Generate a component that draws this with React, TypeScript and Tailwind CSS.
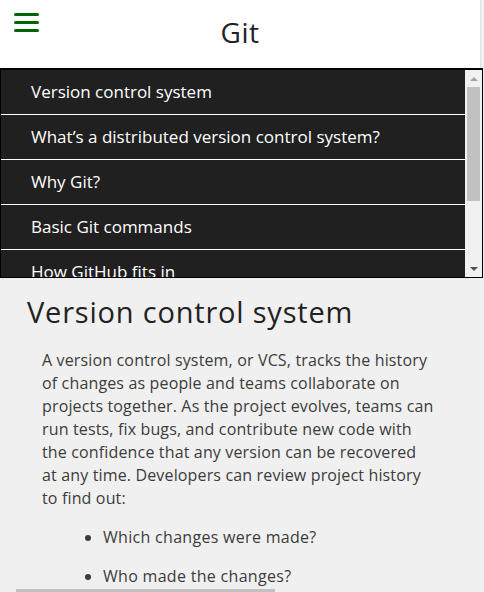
const topics = [
  "Version control system",
  "What’s a distributed version control system?",
  "Why Git?",
  "Basic Git commands",
  "How GitHub fits in",
];

// wrapped the same way the original page breaks them
const introLines = [
  "A version control system, or VCS, tracks the history",
  "of changes as people and teams collaborate on",
  "projects together. As the project evolves, teams can",
  "run tests, fix bugs, and contribute new code with",
  "the confidence that any version can be recovered",
  "at any time. Developers can review project history",
  "to find out:",
];

const font = { fontFamily: '"Open Sans", "Liberation Sans", sans-serif' };

function Hamburger() {
  return (
    <div className="flex w-[25px] flex-col gap-[5px] pt-[13px] pl-[14px] box-content">
      <span className="h-[3px] w-[25px] rounded-full bg-[#006400]" />
      <span className="h-[3px] w-[25px] rounded-full bg-[#006400]" />
      <span className="h-[3px] w-[25px] rounded-full bg-[#006400]" />
    </div>
  );
}

function FakeScrollbar() {
  return (
    <div className="flex w-[17px] flex-col items-center bg-[#f1f1f1]">
      <div className="flex h-[17px] items-center justify-center">
        <span className="h-0 w-0 border-x-[4px] border-b-[4px] border-x-transparent border-b-[#a3a3a3]" />
      </div>
      <div className="flex-1 w-full px-[2px]">
        <div className="h-[114px] w-full bg-[#c1c1c1]" />
      </div>
      <div className="flex h-[17px] items-center justify-center">
        <span className="h-0 w-0 border-x-[4px] border-t-[4px] border-x-transparent border-t-[#505050]" />
      </div>
    </div>
  );
}

export default function App() {
  return (
    <div
      className="relative h-[592px] w-[484px] overflow-hidden bg-[#f0f0f0]"
      style={font}
    >
      {/* Header */}
      <header className="grid h-[68px] w-[481px] grid-cols-[1fr_auto_1fr] border-r border-[#e4e4e4] bg-white">
        <div className="self-start">
          <Hamburger />
        </div>
        <h1 className="self-center pb-[4px] text-[28px] font-normal tracking-[0.5px] text-[#222]">
          Git
        </h1>
        <div />
      </header>

      {/* Topic list */}
      <nav className="flex h-[210px] w-[483px] border border-t-2 border-black">
        <ul className="flex-1 overflow-hidden">
          {topics.map((t) => (
            <li
              key={t}
              className="flex h-[45px] items-center border-b border-white bg-[#202020] pl-[30px] text-[17px] text-white"
            >
              {t}
            </li>
          ))}
        </ul>
        <FakeScrollbar />
      </nav>

      {/* Article */}
      <main className="pt-[14px] pl-[27px]">
        <h2 className="text-[29px] font-normal leading-[40px] tracking-[0.8px] text-[#222]">
          Version control system
        </h2>
        <p className="mt-[17px] ml-[15px] w-[410px] whitespace-nowrap text-[16px] leading-[23px] tracking-[0.15px] text-[#3c3c3c]">
          {introLines.map((line, i) => (
            <span key={i}>
              {line}
              {i < introLines.length - 1 && <br />}
            </span>
          ))}
        </p>
        <ul className="mt-[16px] flex list-disc flex-col gap-[16px] pl-[76px] text-[16px] leading-[23px] tracking-[0.3px] text-[#3c3c3c]">
          <li>Which changes were made?</li>
          <li>Who made the changes?</li>
          <li>When were the changes made?</li>
        </ul>
      </main>

      {/* page horizontal scrollbar thumb */}
      <div className="absolute bottom-0 left-[16px] h-[3px] w-[259px] bg-[#c1c1c1]" />
    </div>
  );
}
